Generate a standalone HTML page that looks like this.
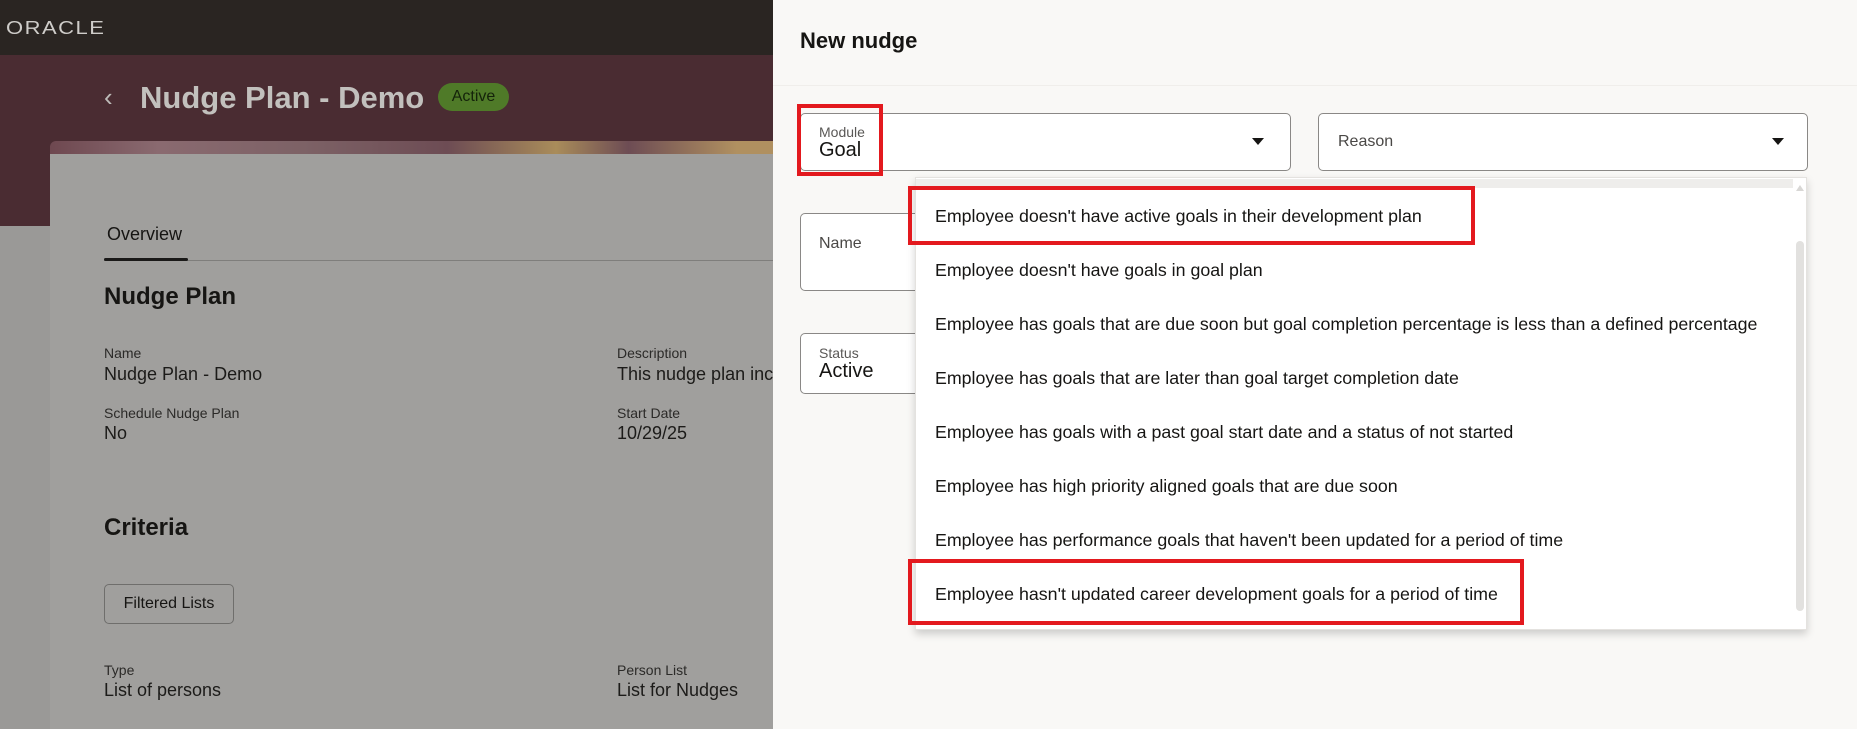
<!DOCTYPE html>
<html><head><meta charset="utf-8"><style>
*{box-sizing:border-box;margin:0;padding:0}
body{width:1857px;height:729px;overflow:hidden;position:relative;font-family:"Liberation Sans",sans-serif;background:#9a9997;color:#161513}
.abs{position:absolute}
.topbar{left:0;top:0;width:773px;height:55px;background:#2a2522}
.banner{left:0;top:55px;width:773px;height:171px;background:#4a2c32}
.deco{left:50px;top:141px;width:723px;height:14px;border-radius:6px 0 0 0;background:linear-gradient(90deg,#6e4850 0%,#8a6a70 15%,#7d6266 35%,#6d4c54 55%,#a98c5a 70%,#6d4c54 80%,#b09060 95%)}
.card{left:50px;top:154px;width:723px;height:575px;background:#a09f9d}
.lbl{font-size:14px;color:#2b2a28}
.val{font-size:18px;color:#1c1b19}
.h2{font-size:24px;font-weight:bold}
.panel{left:773px;top:0;width:1084px;height:729px;background:#f9f8f6}
.field{background:#fff;border:1px solid #8a8886;border-radius:5px}
.flab{font-size:14px;color:#5a5856}
.fval{font-size:20px;color:#161513}
.dd{left:915px;top:177px;width:892px;height:453px;background:#fff;box-shadow:0 4px 8px rgba(0,0,0,.18);border:1px solid #e4e2df}
.item{position:absolute;left:19px;font-size:17.8px;color:#161513;white-space:nowrap}
.red{border:4px solid #e3191e}
.tri{width:0;height:0;border-left:6px solid transparent;border-right:6px solid transparent;border-top:7px solid #161513}
</style></head><body>
<div class="abs topbar"></div>
<div class="abs" style="left:6px;top:15px;font-size:22px;color:#cfcdca;letter-spacing:1.5px;transform:scaleY(0.85)">ORACLE</div>
<div class="abs banner"></div>
<div class="abs" style="left:104px;top:82px;font-size:26px;color:#bdbbb8">&#8249;</div>
<div class="abs" style="left:140px;top:80px;font-size:31px;font-weight:bold;color:#c2c0bd">Nudge Plan - Demo</div>
<div class="abs" style="left:438px;top:83px;width:71px;height:28px;border-radius:14px;background:#4f7a28;color:#14230a;font-size:16px;text-align:center;line-height:28px">Active</div>
<div class="abs deco"></div>
<div class="abs card"></div>
<div class="abs" style="left:107px;top:224px;font-size:18px">Overview</div>
<div class="abs" style="left:104px;top:260px;width:669px;height:1px;background:#7f7e7c"></div>
<div class="abs" style="left:104px;top:258px;width:84px;height:3px;background:#1a1918;border-radius:2px"></div>
<div class="abs h2" style="left:104px;top:283px">Nudge Plan</div>
<div class="abs lbl" style="left:104px;top:345px">Name</div>
<div class="abs val" style="left:104px;top:364px">Nudge Plan - Demo</div>
<div class="abs lbl" style="left:617px;top:345px">Description</div>
<div class="abs val" style="left:617px;top:364px;width:156px;overflow:hidden;white-space:nowrap">This nudge plan includes</div>
<div class="abs lbl" style="left:104px;top:405px">Schedule Nudge Plan</div>
<div class="abs val" style="left:104px;top:423px">No</div>
<div class="abs lbl" style="left:617px;top:405px">Start Date</div>
<div class="abs val" style="left:617px;top:423px">10/29/25</div>
<div class="abs h2" style="left:104px;top:514px">Criteria</div>
<div class="abs" style="left:104px;top:584px;width:130px;height:40px;border:1px solid #6f6e6c;border-radius:5px;font-size:16px;text-align:center;line-height:38px">Filtered Lists</div>
<div class="abs lbl" style="left:104px;top:662px">Type</div>
<div class="abs val" style="left:104px;top:680px">List of persons</div>
<div class="abs lbl" style="left:617px;top:662px">Person List</div>
<div class="abs val" style="left:617px;top:680px">List for Nudges</div>

<div class="abs panel"></div>
<div class="abs" style="left:800px;top:28px;font-size:22px;font-weight:bold">New nudge</div>
<div class="abs" style="left:773px;top:85px;width:1084px;height:1px;background:#f0eeeb"></div>

<div class="abs field" style="left:800px;top:113px;width:491px;height:58px"></div>
<div class="abs flab" style="left:819px;top:124px">Module</div>
<div class="abs fval" style="left:819px;top:139px">Goal</div>
<div class="abs tri" style="left:1252px;top:138px"></div>
<div class="abs red" style="left:797px;top:104px;width:86px;height:72px"></div>

<div class="abs field" style="left:1318px;top:113px;width:490px;height:58px"></div>
<div class="abs" style="left:1338px;top:133px;font-size:16px;color:#4a4846">Reason</div>
<div class="abs tri" style="left:1772px;top:138px"></div>

<div class="abs field" style="left:800px;top:213px;width:130px;height:78px;border-right:none;border-radius:5px 0 0 5px"></div>
<div class="abs" style="left:819px;top:235px;font-size:16px;color:#4a4846">Name</div>
<div class="abs field" style="left:800px;top:333px;width:130px;height:61px;border-right:none;border-radius:5px 0 0 5px"></div>
<div class="abs flab" style="left:819px;top:345px">Status</div>
<div class="abs fval" style="left:819px;top:360px">Active</div>

<div class="abs dd">
<div class="abs" style="left:0;top:1px;width:877px;height:9px;background:#eeedeb"></div>
<div class="abs" style="left:880px;top:63px;width:8px;height:370px;background:#e2e1df;border-radius:4px"></div>
<div class="abs" style="left:880px;top:7px;width:0;height:0;border-left:4px solid transparent;border-right:4px solid transparent;border-bottom:6px solid #d8d7d5"></div>
<div class="item" style="top:28px">Employee doesn't have active goals in their development plan</div>
<div class="item" style="top:82px">Employee doesn't have goals in goal plan</div>
<div class="item" style="top:136px">Employee has goals that are due soon but goal completion percentage is less than a defined percentage</div>
<div class="item" style="top:190px">Employee has goals that are later than goal target completion date</div>
<div class="item" style="top:244px">Employee has goals with a past goal start date and a status of not started</div>
<div class="item" style="top:298px">Employee has high priority aligned goals that are due soon</div>
<div class="item" style="top:352px">Employee has performance goals that haven't been updated for a period of time</div>
<div class="item" style="top:406px">Employee hasn't updated career development goals for a period of time</div>
</div>
<div class="abs red" style="left:908px;top:186px;width:567px;height:59px"></div>
<div class="abs red" style="left:908px;top:559px;width:616px;height:66px"></div>
</body></html>
